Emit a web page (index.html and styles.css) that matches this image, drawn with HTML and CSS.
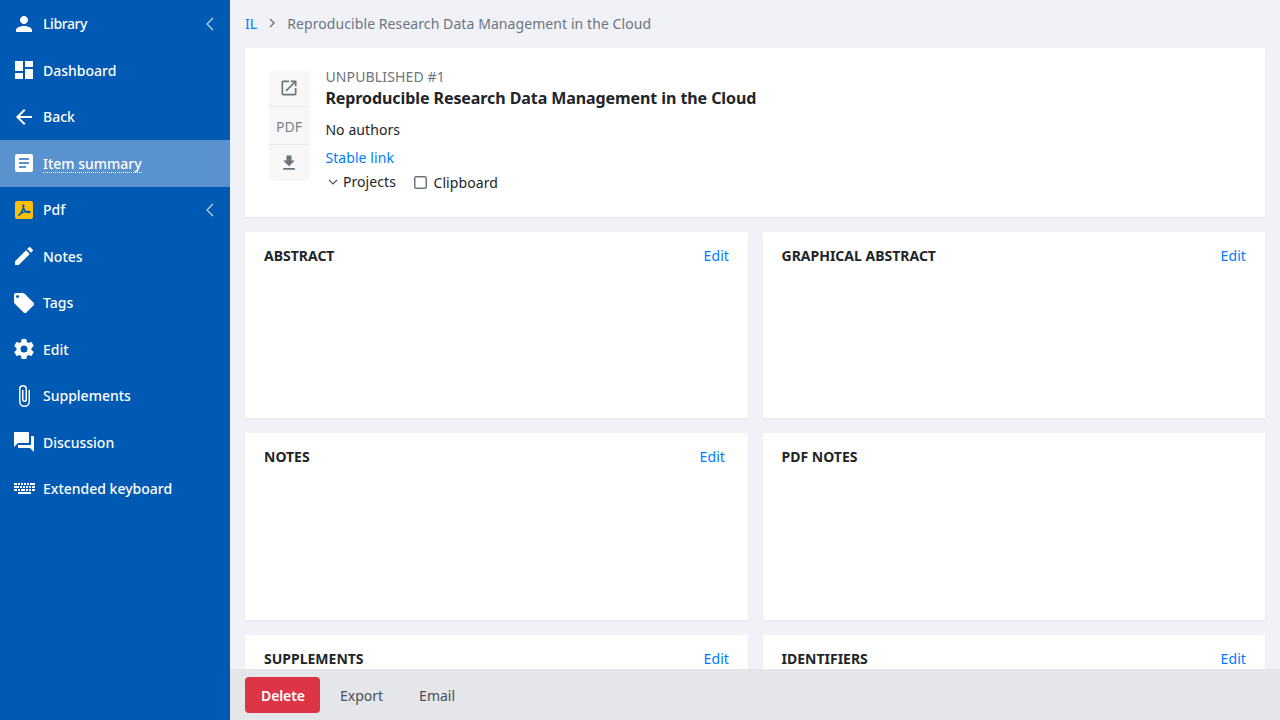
FILE: index.html
```html
<!DOCTYPE html>
<html lang="en">
<head>
<meta charset="utf-8">
<title>Item summary</title>
<link rel="stylesheet" href="styles.css">
</head>
<body>
<div class="app">
  <nav class="sidebar">
    <a class="nav-item"><svg class="nav-icon" viewBox="0 0 24 24"><path d="M12 12c2.210 0 4-1.790 4-4s-1.790-4-4-4-4 1.790-4 4 1.790 4 4 4zm0 2c-2.670 0-8 1.340-8 4v2h16v-2c0-2.660-5.330-4-8-4z"/></svg><span class="nav-label tight">Library</span><svg class="chev" viewBox="0 0 8 14"><path d="M7 1 1 7l6 6"/></svg></a>
    <a class="nav-item"><svg class="nav-icon" viewBox="0 0 24 24"><path d="M3 13h8V3H3zm0 8h8v-6H3zm10 0h8V11h-8zm0-18v6h8V3z"/></svg><span class="nav-label">Dashboard</span></a>
    <a class="nav-item"><svg class="nav-icon" viewBox="0 0 24 24"><path d="M20 11H7.830l5.590-5.590L12 4l-8 8 8 8 1.410-1.410L7.830 13H20z"/></svg><span class="nav-label">Back</span></a>
    <a class="nav-item active"><svg class="nav-icon" viewBox="0 0 24 24"><path d="M19 3H5a2 2 0 0 0-2 2v14a2 2 0 0 0 2 2h14a2 2 0 0 0 2-2V5a2 2 0 0 0-2-2zm-5 14H7v-2h7zm3-4H7v-2h10zm0-4H7V7h10z"/></svg><span class="nav-label dotted">Item summary</span></a>
    <a class="nav-item"><svg class="nav-icon" viewBox="0 0 24 24"><rect x="3" y="3" width="18" height="18" rx="2" fill="#fdc007"/><path d="M6.500 17.500c1.500-1 3.600-4.400 4.700-7.300.3-.9.6-2.600.4-3-.3-.5-.8 0-.5 1.400.6 2.500 2.100 4.800 3.400 5.400 1 .5 3.200.4 3.500 0 .2-.4-2.600-.7-5.200-.2-2.200.4-5.200 2.200-6.300 3.700z" fill="none" stroke="#0059b3" stroke-width="1.600"/></svg><span class="nav-label">Pdf</span><svg class="chev" viewBox="0 0 8 14"><path d="M7 1 1 7l6 6"/></svg></a>
    <a class="nav-item"><svg class="nav-icon" viewBox="0 0 24 24"><path d="M3 17.250V21h3.750L17.810 9.940l-3.750-3.750zM20.710 7.040a1 1 0 0 0 0-1.410l-2.340-2.340a1 1 0 0 0-1.410 0l-1.830 1.830 3.750 3.750z"/></svg><span class="nav-label">Notes</span></a>
    <a class="nav-item"><svg class="nav-icon" viewBox="0 0 24 24"><path d="M21.410 11.580l-9-9A2 2 0 0 0 11 2H4a2 2 0 0 0-2 2v7c0 .55.220 1.050.590 1.420l9 9a2 2 0 0 0 2.820 0l7-7a2 2 0 0 0 0-2.840zM5.500 7A1.500 1.500 0 1 1 5.500 4a1.500 1.500 0 0 1 0 3z"/></svg><span class="nav-label">Tags</span></a>
    <a class="nav-item"><svg class="nav-icon" viewBox="0 0 24 24"><path d="M19.430 12.980c.04-.32.070-.64.070-.98s-.03-.66-.07-.98l2.110-1.650a.5.500 0 0 0 .12-.64l-2-3.460a.5.500 0 0 0-.61-.22l-2.490 1a7.300 7.300 0 0 0-1.690-.98l-.38-2.650A.49.49 0 0 0 14 2h-4a.49.49 0 0 0-.49.420l-.38 2.650c-.61.250-1.170.590-1.690.98l-2.490-1a.5.500 0 0 0-.61.220l-2 3.460a.49.49 0 0 0 .12.640l2.110 1.650c-.04.320-.07.650-.07.980s.03.660.07.980l-2.110 1.650a.5.500 0 0 0-.12.640l2 3.460c.12.220.390.300.61.220l2.490-1c.52.400 1.080.730 1.690.98l.38 2.650c.03.240.240.420.490.420h4c.25 0 .46-.18.490-.42l.38-2.650c.61-.25 1.170-.59 1.690-.98l2.490 1c.23.090.49 0 .61-.22l2-3.460a.5.500 0 0 0-.12-.64zM12 15.500a3.500 3.500 0 1 1 0-7 3.500 3.500 0 0 1 0 7z"/></svg><span class="nav-label">Edit</span></a>
    <a class="nav-item"><svg class="nav-icon" viewBox="0 0 24 24"><path d="M16.500 6v11.500a4 4 0 0 1-8 0V5a2.500 2.500 0 0 1 5 0v10.500a1 1 0 0 1-2 0V6H10v9.500a2.500 2.500 0 0 0 5 0V5a4 4 0 0 0-8 0v12.500a5.500 5.500 0 0 0 11 0V6z"/></svg><span class="nav-label">Supplements</span></a>
    <a class="nav-item"><svg class="nav-icon" viewBox="0 0 24 24"><path d="M21 6h-2v9H6v2c0 .55.450 1 1 1h11l4 4V7c0-.55-.45-1-1-1zm-4 6V3c0-.55-.45-1-1-1H3c-.55 0-1 .450-1 1v14l4-4h10c.55 0 1-.45 1-1z"/></svg><span class="nav-label">Discussion</span></a>
    <a class="nav-item"><svg class="nav-icon" viewBox="0 0 24 24"><path d="M2 6h3v2H2zM6 6h2v2H6zM9 6h2v2H9zM12 6h2v2h-2zM15 6h2v2h-2zM18 6h5v2h-5zM2 9h5v2H2zM8 9h2v2H8zM11 9h2v2h-2zM14 9h2v2h-2zM17 9h2v2h-2zM20 9h3v2h-3zM2 12h3v2H2zM6 12h2v2H6zM9 12h4v2H9zM14 12h2v2h-2zM17 12h2v2h-2zM20 12h3v2h-3zM6 15h13v2H6z"/></svg><span class="nav-label">Extended keyboard</span></a>
  </nav>
  <div class="main">
    <div class="scroll">
      <div class="breadcrumb"><a class="link">IL</a><svg class="crumb-sep" viewBox="0 0 8 12"><path d="M2 2l4 4-4 4"/></svg><span>Reproducible Research Data Management in the Cloud</span></div>
      <section class="card head">
        <div class="tools">
          <div class="tool"><svg class="tool-icon" viewBox="0 0 24 24"><path d="M19 19H5V5h7V3H5a2 2 0 0 0-2 2v14a2 2 0 0 0 2 2h14a2 2 0 0 0 2-2v-7h-2zM14 3v2h3.590l-9.830 9.830 1.410 1.410L19 6.410V10h2V3z"/></svg></div>
          <div class="tool pdf">PDF</div>
          <div class="tool"><svg class="tool-icon" viewBox="0 0 24 24"><path d="M19 9h-4V3H9v6H5l7 7zM5 18v2h14v-2z"/></svg></div>
        </div>
        <div class="info">
          <div class="kicker">UNPUBLISHED #1</div>
          <h1 class="title">Reproducible Research Data Management in the Cloud</h1>
          <div class="authors">No authors</div>
          <a class="link stable">Stable link</a>
          <div class="meta">
            <span class="projects"><svg class="down" viewBox="0 0 10 6"><path d="M1 1l4 4 4-4"/></svg>Projects</span>
            <span class="clip"><svg class="box" viewBox="0 0 13 13"><rect x="0.75" y="0.75" width="11.5" height="11.5" rx="1.5"/></svg>Clipboard</span>
          </div>
        </div>
      </section>
      <div class="grid">
        <section class="card panel"><div class="panel-head"><h2>ABSTRACT</h2><a class="link">Edit</a></div></section>
        <section class="card panel"><div class="panel-head"><h2>GRAPHICAL ABSTRACT</h2><a class="link">Edit</a></div></section>
        <section class="card panel"><div class="panel-head"><h2>NOTES</h2><a class="link edit-inset">Edit</a></div></section>
        <section class="card panel"><div class="panel-head"><h2>PDF NOTES</h2></div></section>
        <section class="card panel"><div class="panel-head"><h2>SUPPLEMENTS</h2><a class="link">Edit</a></div></section>
        <section class="card panel"><div class="panel-head"><h2>IDENTIFIERS</h2><a class="link">Edit</a></div></section>
      </div>
    </div>
    <footer class="actions">
      <button class="btn danger">Delete</button>
      <button class="btn">Export</button>
      <button class="btn">Email</button>
    </footer>
  </div>
</div>
</body>
</html>
```
FILE: styles.css
```css
* { box-sizing: border-box; }
html, body { margin: 0; height: 100%; }
body { font-family: "Noto Sans", sans-serif; font-size: 14px; color: #212529; overflow: hidden; }
.app { display: flex; height: 720px; }
.sidebar { width: 230px; flex: none; background: #0059b3; padding-top: 0.5px; }
.nav-item { display: flex; align-items: center; height: 46.5px; padding: 0 13px 0 12px; color: #fff; font-weight: 500; }
.nav-item.active { background: #5a91cf; }
.nav-icon { width: 24px; height: 24px; fill: #fff; flex: none; }
.nav-label { margin-left: 7px; flex: 1; white-space: nowrap; }
.nav-label.tight { letter-spacing: -0.4px; }
.nav-label.dotted { flex: none; border-bottom: 1px dotted #fff; line-height: 16px; padding-top: 2px; }
.chev { width: 8px; height: 14px; margin-right: 3px; fill: none; stroke: #cfe0f3; stroke-width: 1.1; }
.main { flex: 1; min-width: 0; display: flex; flex-direction: column; background: #f0f2f7; }
.scroll { flex: 1; min-height: 0; overflow: hidden; padding: 0 15px; }
.breadcrumb { height: 46px; margin-bottom: 2px; display: flex; align-items: center; color: #6c757d; letter-spacing: 0.08px; }
.link { color: #007bff; letter-spacing: 0.08px; }
.crumb-sep { width: 8px; height: 12px; margin: 0 11px 0 11px; fill: none; stroke: #6c757d; stroke-width: 1.4; }
.card { background: #fff; box-shadow: 0 1px 2px rgba(0,0,0,.05); }
.head { display: flex; height: 169px; padding: 22px 24px; }
.tools { width: 41px; height: 111px; background: #f7f7f7; border-radius: 6px; display: flex; flex-direction: column; }
.tool { flex: 1; display: flex; align-items: center; justify-content: center; padding-right: 1px; color: #6c757d; }
.tool + .tool { border-top: 1px solid #ececec; }
.tool.pdf { padding-top: 1px; color: #7a838a; }
.tool-icon { width: 20px; height: 20px; fill: #6c757d; }
.info { margin-left: 15.4px; margin-top: -3px; display: flex; flex-direction: column; align-items: flex-start; letter-spacing: 0.08px; }
.kicker { color: #6c757d; line-height: 19px; letter-spacing: 0.14px; }
.title { margin: 0; font-size: 16px; font-weight: 700; line-height: 24px; letter-spacing: -0.08px; }
.authors { margin-top: 10px; line-height: 20px; }
.stable { margin-top: 8px; line-height: 20px; }
.meta { display: flex; align-items: center; margin-top: 4px; padding-left: 3px; }
.projects { display: flex; align-items: center; margin-bottom: 2px; }
.down { width: 10px; height: 6px; margin-right: 4.5px; fill: none; stroke: #495057; stroke-width: 1.1; }
.clip { display: flex; align-items: center; margin-left: 18.5px; }
.box { width: 13px; height: 13px; margin-right: 6px; fill: none; stroke: #6c757d; stroke-width: 1.5; }
.grid { display: grid; grid-template-columns: 503px 502px; gap: 15px; margin-top: 15px; }
.panel { height: 186.4px; padding: 13px 19px 13px 19px; }
.panel + .panel:nth-child(even) { padding-left: 18.5px; }
.panel-head { display: flex; justify-content: space-between; line-height: 22px; }
.panel-head h2 { margin: 0; font-size: 14px; font-weight: 700; }
.edit-inset { margin-right: 4px; }
.actions { flex: none; height: 51px; background: #e4e6ea; display: flex; align-items: center; padding: 0 15px; }
.btn { font: inherit; border: 0; background: none; color: #495057; padding: 1px 18px 0; height: 36px; border-radius: 4px; }
.btn.danger { background: #dc3545; color: #fff; font-weight: 600; padding: 1px 16px 0; width: 75px; letter-spacing: -0.1px; }
.btn.danger + .btn { padding: 1px 18px 0 20px; }
```
